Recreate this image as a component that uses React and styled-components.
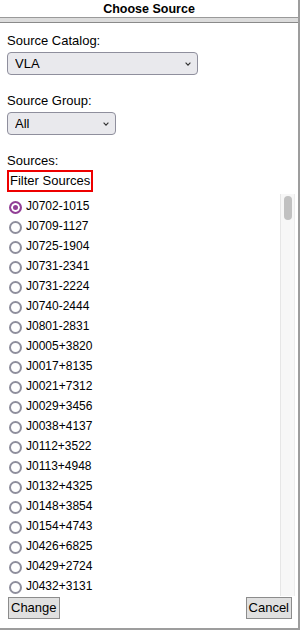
import React, { useState } from "react";
import styled, { createGlobalStyle } from "styled-components";

const GlobalStyle = createGlobalStyle`
  html, body { margin: 0; padding: 0; background: #ffffff; }
  body { font-family: "Liberation Sans", Arial, sans-serif; color: #000; }
`;

const SOURCES = [
  "J0702-1015", "J0709-1127", "J0725-1904", "J0731-2341", "J0731-2224",
  "J0740-2444", "J0801-2831", "J0005+3820", "J0017+8135", "J0021+7312",
  "J0029+3456", "J0038+4137", "J0112+3522", "J0113+4948", "J0132+4325",
  "J0148+3854", "J0154+4743", "J0426+6825", "J0429+2724", "J0432+3131",
];

const Panel = styled.div`
  width: 300px;
  height: 630px;
  box-sizing: border-box;
  border-right: 2px solid #9d9d9d;
  border-bottom: 2px solid #9d9d9d;
  display: flex;
  flex-direction: column;
`;

const TitleBar = styled.div`
  height: 18px;
  box-sizing: border-box;
  padding-top: 2px;
  line-height: 15px;
  font-size: 12.5px;
  font-weight: bold;
  text-align: center;
  border-bottom: 1px solid #9a9a9a;
`;

const Divider = styled.div`
  height: 4px;
  background: #dcdcdc;
  border-bottom: 1px solid #8a8a8a;
`;

const Content = styled.div`
  display: flex;
  flex-direction: column;
  padding-left: 7px;
`;

const FieldLabel = styled.div`
  margin-top: ${(p) => p.$gap}px;
  font-size: 13px;
  line-height: 15px;
`;

const SelectWrap = styled.div`
  position: relative;
  align-self: flex-start;
  width: ${(p) => p.$width}px;
  margin-top: 4px;
`;

const Select = styled.select`
  appearance: none;
  -webkit-appearance: none;
  display: block;
  width: 100%;
  height: 23px;
  box-sizing: border-box;
  margin: 0;
  padding: 0 20px 0 7px;
  border: 1px solid #8f8f9d;
  border-radius: 4px;
  background: #e9e9ed;
  color: #000;
  font-family: "Liberation Sans", Arial, sans-serif;
  font-size: 13px;
  outline: none;
`;

const Chevron = styled.svg`
  position: absolute;
  right: 7px;
  top: 10px;
  width: 6px;
  height: 4px;
  pointer-events: none;
`;

const Filter = styled.div`
  align-self: flex-start;
  margin-top: 2px;
  border: 2px solid #ee0000;
  padding: 1px 1px 2px;
  font-size: 13px;
  line-height: 15px;
`;

const ListBox = styled.div`
  display: flex;
  margin-top: 2px;
  width: 288px;
  height: 402px;
`;

const Scroller = styled.div`
  flex: 1;
  min-width: 0;
  box-sizing: border-box;
  padding-top: 2px;
  overflow-y: auto;
  scrollbar-width: none;
  &::-webkit-scrollbar { display: none; }
`;

const Track = styled.div`
  width: 15px;
  flex: none;
  box-sizing: border-box;
  background: #f7f7f7;
  border-left: 1px solid #e6e6e6;
  border-right: 1px solid #ececec;
  padding: 2px 0 0 3px;
`;

const Thumb = styled.div`
  width: 8px;
  height: 24px;
  border-radius: 4px;
  background: #c1c1c1;
`;

const Row = styled.label`
  display: flex;
  align-items: flex-start;
  height: 20px;
  font-size: 12px;
  line-height: 20px;
  white-space: nowrap;
`;

const Radio = styled.input`
  appearance: none;
  -webkit-appearance: none;
  width: 13px;
  height: 13px;
  margin: 5px 4px 0 2px;
  box-sizing: border-box;
  border-radius: 50%;
  border: 2px solid #8f8f9d;
  background: #fff;
  flex: none;

  &:checked {
    border-color: #923f96;
    background: #923f96;
    box-shadow: inset 0 0 0 2px #fff;
  }
`;

const ButtonRow = styled.div`
  display: flex;
  justify-content: space-between;
  margin-top: 1px;
  padding: 0 6px 0 8px;
`;

const Button = styled.button`
  height: 22px;
  box-sizing: border-box;
  margin: 0;
  padding: 0 2px;
  border: 1px solid #8c8c8c;
  border-radius: 0;
  background: #e0e0e0;
  color: #000;
  font-family: "Liberation Sans", Arial, sans-serif;
  font-size: 13px;
  line-height: 20px;
`;

function ChevronIcon() {
  return (
    <Chevron viewBox="0 0 6 4">
      <polyline points="0.6,0.6 3,3.2 5.4,0.6" fill="none" stroke="#333" strokeWidth="1.1" />
    </Chevron>
  );
}

export default function App() {
  const [catalog, setCatalog] = useState("VLA");
  const [group, setGroup] = useState("All");
  const [source, setSource] = useState(SOURCES[0]);

  return (
    <>
      <GlobalStyle />
      <Panel>
        <TitleBar>Choose Source</TitleBar>
        <Divider />
        <Content>
          <FieldLabel $gap={10}>Source Catalog:</FieldLabel>
          <SelectWrap $width={191}>
            <Select value={catalog} onChange={(e) => setCatalog(e.target.value)}>
              <option>VLA</option>
              <option>ATCA</option>
              <option>VLBA</option>
            </Select>
            <ChevronIcon />
          </SelectWrap>

          <FieldLabel $gap={18}>Source Group:</FieldLabel>
          <SelectWrap $width={109}>
            <Select value={group} onChange={(e) => setGroup(e.target.value)}>
              <option>All</option>
              <option>Calibrators</option>
              <option>Targets</option>
            </Select>
            <ChevronIcon />
          </SelectWrap>

          <FieldLabel $gap={18}>Sources:</FieldLabel>
          <Filter>Filter Sources</Filter>

          <ListBox>
            <Scroller>
              {SOURCES.map((name) => (
                <Row key={name}>
                  <Radio
                    type="radio"
                    name="source"
                    checked={source === name}
                    onChange={() => setSource(name)}
                  />
                  {name}
                </Row>
              ))}
            </Scroller>
            <Track>
              <Thumb />
            </Track>
          </ListBox>
        </Content>
        <ButtonRow>
          <Button>Change</Button>
          <Button>Cancel</Button>
        </ButtonRow>
      </Panel>
    </>
  );
}
